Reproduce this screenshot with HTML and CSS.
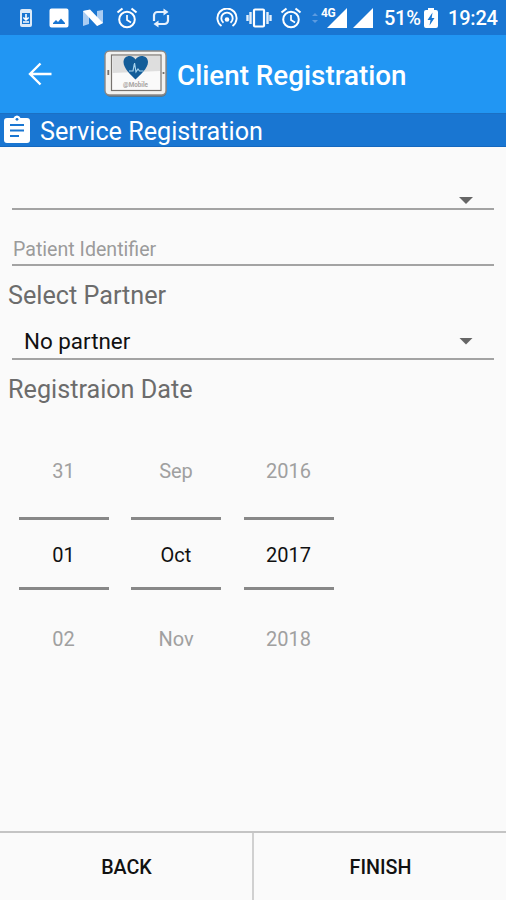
FILE: index.html
```html
<!DOCTYPE html>
<html lang="en">
<head>
<meta charset="utf-8">
<title>Client Registration</title>
<link rel="stylesheet" href="styles.css">
</head>
<body>
<div class="screen">
  <div class="status">
    <div class="status-left">
      <svg width="14" height="20" viewBox="0 0 14 20"><path fill="#fff" opacity=".85" fill-rule="evenodd" d="M3 1h8a2 2 0 0 1 2 2v14a2 2 0 0 1-2 2H3a2 2 0 0 1-2-2V3a2 2 0 0 1 2-2zM3 5v11h8V5z"/><path fill="none" stroke="#fff" stroke-width="1.6" d="M7 6v6M4.300 9.500 7 12l2.700-2.500M4 14h6"/></svg>
      <svg width="20" height="20" viewBox="0 0 20 20"><path fill="#fff" fill-rule="evenodd" d="M2.500 .5h15a2 2 0 0 1 2 2v15a2 2 0 0 1-2 2h-15a2 2 0 0 1-2-2v-15a2 2 0 0 1 2-2zM4 16h12v-1l-4-4.500-3 3.500-2-2-3 3z"/></svg>
      <svg width="22" height="20" viewBox="0 0 22 20"><path fill="#a9ccf2" d="M1 3l6-1v14l-6 2zM15 3l6-1v13l-6 3z"/><path fill="#fff" d="M1 3 8 1.500 21 15l-6 3z"/></svg>
      <svg width="22" height="22" viewBox="0 0 22 22"><g fill="none" stroke="#fff"><circle cx="11" cy="12.500" r="7.800" stroke-width="2"/><path stroke-width="1.700" d="M11 8v5l4 2.500"/><path stroke-width="2.200" d="M1.500 5.500 6.500 1.500M15.500 1.500l5 4"/></g></svg>
      <svg width="20" height="20" viewBox="0 0 20 20"><g fill="none" stroke="#e7f1fd" stroke-width="2.200"><path d="M3 13V7.500a3.500 3.500 0 0 1 3.500-3.500H15M17 7v5.500a3.500 3.500 0 0 1-3.500 3.500H5"/></g><path fill="#e7f1fd" d="M12.500 .5l5 3.500-5 3.500zM7.500 12.500l-5 3.500 5 3.500z"/></svg>
    </div>
    <div class="status-right">
      <svg width="22" height="20" viewBox="0 0 22 20"><g fill="none" stroke="#fff" stroke-width="1.900"><path d="M5.500 18a9.600 9.600 0 1 1 11 0"/><path d="M7.500 14.800a5.700 5.700 0 1 1 7 0"/></g><circle cx="11" cy="11.500" r="2.300" fill="#fff"/></svg>
      <svg width="26" height="20" viewBox="0 0 26 20"><rect x="8" y="1.500" width="10" height="17" rx="1" fill="none" stroke="#fff" stroke-width="2.200"/><path fill="none" stroke="#e2effc" stroke-width="2.400" d="M4.500 4v12M21.500 4v12M1.500 7v6M24.500 7v6"/></svg>
      <svg width="22" height="22" viewBox="0 0 22 22"><g fill="none" stroke="#fff"><circle cx="11" cy="12.500" r="7.800" stroke-width="2"/><path stroke-width="1.700" d="M11 8v5l4 2.500"/><path stroke-width="2.200" d="M1.500 5.500 6.500 1.500M15.500 1.500l5 4"/></g></svg>
      <svg class="data" width="6" height="12" viewBox="0 0 6 12"><path fill="#5c9be0" d="M0 4l3-3 3 3zM0 8h6l-3 3z"/></svg>
      <div class="cell"><span class="net">4G</span><svg width="20" height="20" viewBox="0 0 20 20"><path fill="#fff" d="M20 0v20H0z"/></svg></div>
      <svg class="signal" width="20" height="20" viewBox="0 0 20 20"><path fill="#fff" d="M20 0v20H0z"/></svg>
      <span class="percent">51%</span>
      <svg class="battery" width="14" height="20" viewBox="0 0 14 20"><path fill="#fff" d="M4 0h6v2h2a2 2 0 0 1 2 2v14a2 2 0 0 1-2 2H2a2 2 0 0 1-2-2V4a2 2 0 0 1 2-2h2z"/><path fill="#1976d2" d="M8.500 4.500 3.500 12h3l-1 5.500L10.500 10H7.700z"/></svg>
      <span class="time">19:24</span>
    </div>
  </div>

  <header class="appbar">
    <svg class="back" width="24" height="24" viewBox="0 0 24 24"><path fill="none" stroke="#fff" stroke-width="2.400" d="M23.500 12H2M12.500 1.500 2 12l10.500 10.500"/></svg>
    <svg class="logo" width="64" height="48" viewBox="0 0 64 48">
      <rect x="1.500" y="2.500" width="61" height="44.500" rx="5" fill="#56778f"/>
      <rect x="1" y="1" width="61" height="44" rx="4.500" fill="#f2f2f0" stroke="#8c8885" stroke-width="1.400"/>
      <rect x="7.500" y="5" width="49.500" height="35.500" fill="#fafafa" stroke="#77736f" stroke-width="1.200"/>
      <path fill="#dedede" d="M8.500 6H56v15L8.500 23z"/>
      <path fill="#135d99" d="M31.500 29.500C27 25 19.500 18.500 19.500 12c0-7 9-8 12-2.500C34.500 4 44 5 44 12c0 6.500-8 13-12.500 17.500z"/>
      <path fill="none" stroke="#a8d4ed" stroke-width="1.200" d="M25 21h4l1.500-8 1.500 9 2-3 1.500 2h4"/>
      <path stroke="#77736f" stroke-width="1.800" d="M4.300 20v5M59.500 22v2"/>
      <text class="logo-text" x="19" y="36.500" textLength="25" lengthAdjust="spacingAndGlyphs">@Mobile</text>
    </svg>
    <h1>Client Registration</h1>
  </header>

  <div class="band">
    <svg width="26" height="28" viewBox="0 0 26 28"><path fill="#fff" d="M3 3h6.500a3.700 3.700 0 0 1 7 0H23a3 3 0 0 1 3 3v19a3 3 0 0 1-3 3H3a3 3 0 0 1-3-3V6a3 3 0 0 1 3-3z"/><circle cx="13" cy="4.300" r="1.400" fill="#1976d2"/><path stroke="#1976d2" stroke-width="2.200" d="M6 10h14M6 15.500h14M6 21h9"/></svg>
    <h2>Service Registration</h2>
  </div>

  <main>
    <div class="field select empty"><span></span><i class="caret"></i></div>
    <div class="field input">Patient Identifier</div>
    <div class="label partner-label">Select Partner</div>
    <div class="field select partner"><span>No partner</span><i class="caret"></i></div>
    <div class="label date-label">Registraion Date</div>
    <div class="picker">
      <div class="wheel"><div class="near">31</div><div class="current">01</div><div class="near next">02</div></div>
      <div class="wheel"><div class="near">Sep</div><div class="current">Oct</div><div class="near next">Nov</div></div>
      <div class="wheel"><div class="near">2016</div><div class="current">2017</div><div class="near next">2018</div></div>
    </div>
  </main>

  <footer>
    <div class="action">BACK</div>
    <div class="action">FINISH</div>
  </footer>
</div>
</body>
</html>
```

FILE: styles.css
```css
* { box-sizing: border-box; }
body { margin: 0; font-family: Roboto, "Liberation Sans", sans-serif; background: #fafafa; }
svg { display: block; flex: none; }
h1, h2 { margin: 0; white-space: nowrap; }

.screen { width: 506px; height: 900px; display: flex; flex-direction: column; overflow: hidden; }

.status { height: 35px; flex: none; display: flex; justify-content: space-between; background: #1976d2; color: #fff; padding: 0 8px 0 19px; }
.status-left, .status-right { display: flex; align-items: center; }
.status-left { gap: 15px; }
.status-left svg:nth-child(2) { margin-left: 1px; }
.status-left svg:nth-child(3) { margin-left: -2px; }
.status-left svg:nth-child(4) { margin-left: -3px; }
.status-left svg:nth-child(5) { margin-left: -2px; }
.status-right > svg:nth-child(2) { margin-left: 8px; }
.status-right > svg:nth-child(3) { margin-left: 8px; }
.status-right .data { margin-left: 10px; }
.cell { position: relative; margin-left: 9px; }
.net { position: absolute; left: -6px; top: -1px; font-size: 12px; line-height: 12px; font-weight: 700; letter-spacing: -0.5px; }
.signal { margin-left: 6px; }
.percent { margin-left: 11px; width: 40px; font-size: 20px; font-weight: 500; letter-spacing: -0.3px; white-space: nowrap; }
.battery { margin-right: 10px; }
.time { width: 50px; font-size: 20px; font-weight: 500; letter-spacing: -0.2px; white-space: nowrap; }

.appbar { height: 78px; flex: none; display: flex; align-items: center; background: #2196f3; color: #fff; padding-left: 28px; }
.logo { margin-left: 52px; }
.logo-text { font: 700 8px Roboto, sans-serif; fill: #a9a5a2; }
h1 { margin-left: 9px; padding-top: 3px; font-size: 27.8px; line-height: 32px; font-weight: 500; }

.band { height: 34px; flex: none; display: flex; align-items: center; background: #1976d2; color: #fff; padding-left: 4px; border-top: 1px solid #1b70c4; border-bottom: 1px solid #1568bf; }
.band svg { margin-bottom: 3px; }
h2 { margin-left: 10px; font-size: 25.2px; line-height: 30px; font-weight: 400; padding-top: 3px; }

main { flex: 1; }
.field { margin: 0 12px; border-bottom: 2px solid #a3a3a3; }
.select { display: flex; justify-content: space-between; }
.empty { height: 63px; align-items: flex-end; padding-bottom: 4px; }
.caret { width: 14px; height: 7px; margin-right: 21px; background: #666; clip-path: polygon(0 0, 100% 0, 50% 100%); }
.input { height: 56px; padding: 28px 0 0 1px; font-size: 19.6px; line-height: 24px; color: #9b9b9b; }
.label { padding-left: 8px; font-size: 25.2px; line-height: 30px; color: #6c6c6c; }
.partner-label { margin-top: 15px; }
.partner { height: 49px; align-items: center; padding: 13px 0 0 12px; font-size: 22.4px; color: #111; }
.date-label { margin-top: 15px; }
.picker { display: flex; gap: 22.5px; margin: 29px 0 0 18.5px; }
.wheel { width: 90px; text-align: center; font-size: 20px; }
.near { height: 83px; line-height: 75px; color: #a0a0a0; }
.next { line-height: 99px; }
.current { height: 73px; line-height: 71px; border-top: 3px solid #888; border-bottom: 3px solid #888; color: #111; }

footer { height: 69px; flex: none; display: flex; border-top: 2px solid #c4c4c4; }
.action { flex: 1; text-align: center; padding-left: 1px; font-size: 19.7px; line-height: 69px; font-weight: 500; color: #111; }
.action + .action { border-left: 2px solid #d0d0d0; }
```
